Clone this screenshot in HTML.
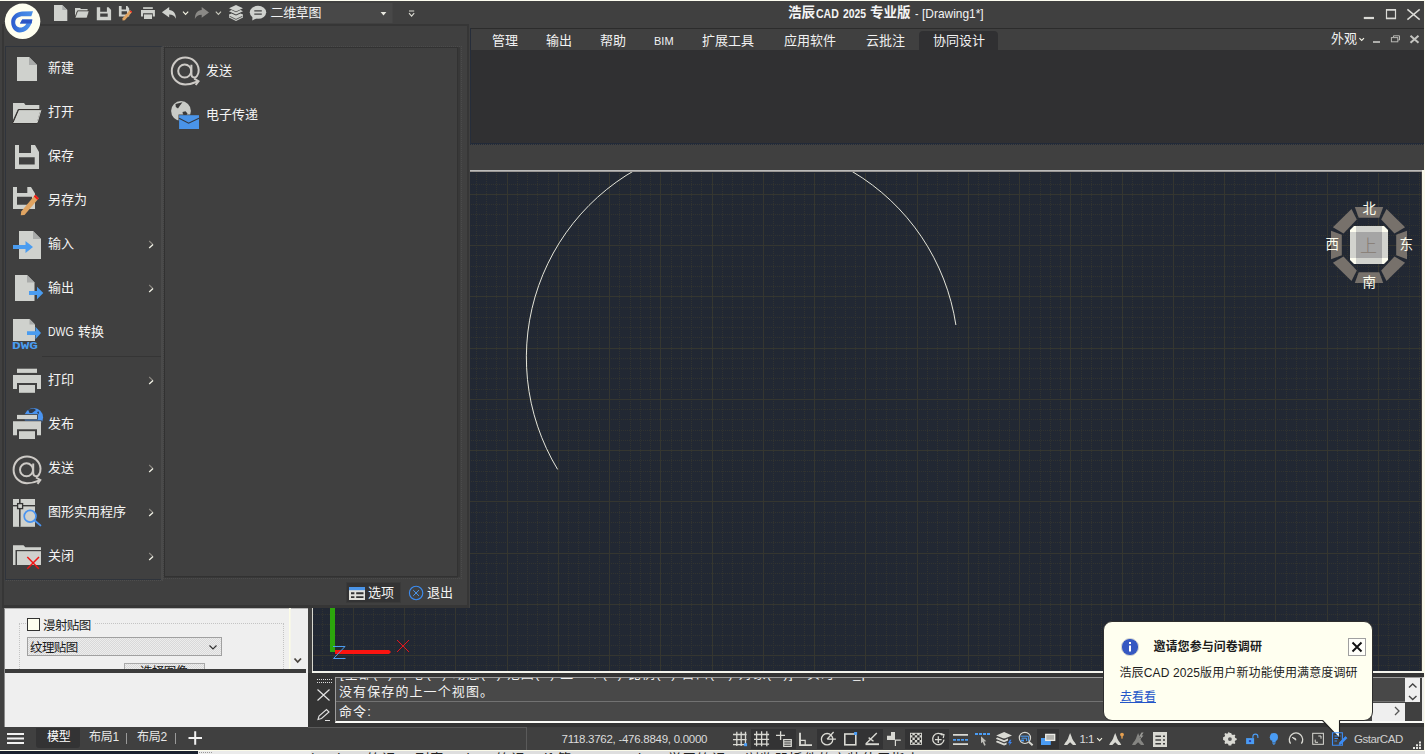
<!DOCTYPE html>
<html lang="zh-CN">
<head>
<meta charset="utf-8">
<title>浩辰CAD 2025 专业版 - [Drawing1*]</title>
<style>
*{box-sizing:border-box;margin:0;padding:0}
html,body{width:1425px;height:754px;overflow:hidden;background:#404040}
body{position:relative;font-family:"Liberation Sans","Noto Sans CJK SC",sans-serif;font-size:13px;color:#f0f0f0;line-height:1}
.abs{position:absolute}
.t{position:absolute;white-space:nowrap;line-height:1}
svg{position:absolute;overflow:visible}
#cv{overflow:hidden}
/* ---------- frame ---------- */
#topline{left:0;top:0;width:1425px;height:1px;background:#fdfdf0}
#rightline{left:1424px;top:0;width:1px;height:754px;background:#fdfdf0}
#titlebar{left:0;top:1px;width:1424px;height:27px;background:#404040}
#titlesep{left:470px;top:28px;width:954px;height:1px;background:#2c2c2c}
#tabsrow{left:470px;top:29px;width:954px;height:21px;background:#404040}
#ribbon{left:470px;top:50px;width:954px;height:93px;background:#303032}
#ribbonsep{left:470px;top:143px;width:954px;height:2px;background:linear-gradient(#222a38 50%,transparent 50%),repeating-linear-gradient(90deg,#222a38 0 1px,#404040 1px 2px)}
#docbar{left:470px;top:144px;width:954px;height:26px;background:#404040}
#canvastop{left:470px;top:170px;width:952px;height:2px;background:linear-gradient(#bababa 50%,#9a9796 50%)}
/* ---------- canvas ---------- */
#canvas{left:313px;top:171px;width:1108px;height:500px;background:#222833;overflow:hidden}
#canvasL{left:312px;top:171px;width:1px;height:502px;background:#d8d8d0}
#canvasB{left:312px;top:671px;width:1111px;height:2px;background:#f4f4ec}
/* ---------- tabs ---------- */
.tab{top:34px;font-size:13px;color:#f2f2f2}
#acttab{left:919px;top:31px;width:79px;height:19px;background:#303032;border-radius:4px 4px 0 0}

/* left prop panel */
#lp{left:4px;top:608px;width:304px;height:119px;background:#efefef;border-top:1px solid #b4b4b4;border-left:1px solid #8a8a8a}
#lpbar{left:5px;top:669px;width:301px;height:4px;background:#3c3c3c}
#lpgrp{left:19px;top:623px;width:265px;height:60px;border:1px dotted #c4c4c4}
#lpline{left:289px;top:607px;width:1px;height:62px;background:#fcfce8;box-shadow:1px 0 0 #f6f6ea}
#lpcb{left:27px;top:618px;width:13px;height:13px;background:#fffff0;border:1px solid #333}
#lpcombo{left:27px;top:637px;width:195px;height:19px;border:1px solid #a0a0a0;background:repeating-conic-gradient(#d9d9d9 0 25%,#ededed 0 50%);background-size:2px 2px}
#lpbtn{left:124px;top:663px;width:81px;height:12px;border:1px solid #a8a8a8;background:repeating-conic-gradient(#d9d9d9 0 25%,#ededed 0 50%);background-size:2px 2px}
.lpt{font-size:12.5px;color:#1a1a1a;letter-spacing:-0.6px}
/* cmd */
#cmdbox{left:335px;top:677px;width:1089px;height:46px;border:1px solid #9c9c9c;border-bottom:2px solid #fcfcf8;border-right:2px solid #f0f0ec;background:#484848;overflow:hidden}
#cmdline2{left:336px;top:701px;width:1069px;height:20px;background:#484848;border-top:1px solid #727272}
.cmdt{font-size:13px;color:#f2f2f2;letter-spacing:1.1px}
#vsb{left:1405px;top:678px;width:15px;height:24px;background:#efefef}
#vsbgap{left:1420px;top:678px;width:2px;height:43px;background:#404040}
#hsb{left:1372px;top:703px;width:33px;height:18px;background:#efefef}
#sbcorner{left:1405px;top:702px;width:17px;height:19px;background:#404040}
/* status */
#modeltab{left:36px;top:728px;width:44px;height:20px;background:#333334;border-radius:0 0 3px 3px}
.st{font-size:12px;color:#e8e8e8;top:731px;letter-spacing:-0.2px}
.sact{position:absolute;top:729px;height:20px;background:#333334}
#stsepv{left:526px;top:727px;width:1px;height:23px;background:#5a5a5a}
#stseph{left:308px;top:727px;width:219px;height:1px;background:#5a5a5a}
/* balloon */
#balloon{left:1103px;top:621px;width:270px;height:100px;background:#fffff0;border:1px solid #2e2e2e;border-radius:9px}
#bclose{left:1348px;top:638px;width:18px;height:18px;border:1px solid #a0a0a0;background:#fffffa}
.bt{font-size:12px;color:#1c1c1c}

/* ---------- status bar ---------- */
#status{left:0;top:727px;width:1424px;height:23px;background:#404040}
#under{left:0;top:750px;width:1425px;height:4px;background:#dedede}
/* ---------- cmd ---------- */
#cmdwrap{left:308px;top:673px;width:1116px;height:54px;background:#343434}
/* ---------- app menu ---------- */
#menu{left:2px;top:24px;width:467px;height:584px;background:#404040;border:2px solid #363636;border-bottom-width:3px;box-shadow:1px 0 0 #404040}
#mleft{left:5px;top:46px;width:158px;height:535px;border:1px solid #2f343c;border-right:2px solid #4a4a4a;border-bottom:1px dotted #4e4e4e}
#mleftb{left:6px;top:579px;width:155px;height:1px;background:#2f343c}
#ribl{left:470px;top:28px;width:1px;height:116px;background:#262d3a}
#mright{left:163px;top:46px;width:299px;height:533px;border:1px dotted #4b4b4b}
#mright2{left:164px;top:47px;width:294px;height:530px;border:1px solid #323232;box-shadow:2px 0 0 #383838,0 1px 0 #383838}
.tt{color:#f4f4f4}
.sx{transform-origin:0 50%}
.vc{font-size:13.5px;color:#fdfdee}
.mi{font-size:13px;color:#f4f4f4;left:48px}
#msep{left:42px;top:356px;width:119px;height:1px;background:#353535}
#optbtn{left:346px;top:582px;width:55px;height:21px;background:#333334;border:1px solid #3a3a3a}
</style>
</head>
<body>
<div class="abs" id="titlebar"></div>
<div class="abs" id="topline"></div>
<div class="abs" id="titlesep"></div>
<div class="abs" id="tabsrow"></div>
<div class="abs" id="ribbon"></div>
<div class="abs" id="docbar"></div>
<div class="abs" id="ribbonsep"></div>
<div class="abs" id="ribl"></div>
<div class="abs" id="rightline"></div>

<!-- title -->
<div class="t tt" style="left:788px;top:6px;font-size:13.5px;font-weight:bold">浩辰</div>
<div class="t tt sx" style="left:816.2px;top:6.5px;font-size:13px;font-weight:bold;transform:scaleX(0.81)">CAD</div>
<div class="t tt sx" style="left:842.5px;top:6.5px;font-size:13px;font-weight:bold;transform:scaleX(0.80)">2025</div>
<div class="t tt" style="left:870px;top:6px;font-size:13.5px;font-weight:bold">专业版</div>
<div class="t tt sx" style="left:915px;top:6.5px;font-size:13px;transform:scaleX(0.8)">-</div>
<div class="t tt sx" style="left:922px;top:6.5px;font-size:13px;transform:scaleX(0.918)">[Drawing1*]</div>

<!--QAT0-->
<svg class="abs" style="left:0;top:0" width="470" height="28" viewBox="0 0 470 28">
<!-- new -->
<path d="M54 5H62.3L67.3 10V21H54Z" fill="#cfd1cd"/><path d="M62.3 5L67.3 10H62.3Z" fill="#a9abaa"/>
<!-- open -->
<path d="M75 8H80L81 9H87.6V10.8H77.2L75 16.5Z" fill="#cfd1cd"/>
<path d="M77.6 10.9H89.2L87 18.1H74.9Z" fill="#cfd1cd" stroke="#3a3634" stroke-width="0.7"/>
<!-- save -->
<path d="M96.8 7.2H108.6L111.1 10V20.2H96.8Z M100.2 7.2V11.8H106.9V7.2Z M100.2 13.5V16.8H107.7V13.5Z" fill="#cfd1cd" fill-rule="evenodd"/>
<!-- save as -->
<path d="M118.9 6H127.4L129.2 8.5V16.4H118.9Z M121.6 6V9.4H126V6Z M121.6 11.2V14.4H127V11.2Z" fill="#cfd1cd" fill-rule="evenodd"/>
<path d="M129.9 10L132.1 12L124.8 20.3L122.5 20.6L122.6 18.3Z" fill="#e0a462"/>
<path d="M130.6 10.6L132.1 12L131.4 12.8L129.9 11.4Z" fill="#f01818"/>
<!-- print -->
<rect x="143.1" y="7.2" width="9.7" height="1.7" fill="#cfd1cd"/>
<path d="M141 10.1H154.9V16.4H152.8V13.3H143.1V16.4H141Z" fill="#cfd1cd"/>
<rect x="144" y="14.4" width="8" height="4.6" fill="#cfd1cd"/>
<!-- undo -->
<path d="M169.2 6.9V9.9C173.5 10.3 176 13.5 176 18.7C174.5 15.8 172.5 14.6 169.2 14.5V17.5L161.9 12.2Z" fill="#cfd1cd"/>
<path d="M183 11.6L185.6 14.4L188.2 11.6" stroke="#f4f4e4" stroke-width="1.1" fill="none"/>
<!-- redo (disabled) -->
<path d="M201.7 7.1V10.1C197.4 10.5 194.9 13.7 194.9 18.9C196.4 16 198.4 14.8 201.7 14.7V17.7L209 12.4Z" fill="#8a8986"/>
<path d="M215.8 11.6L218.4 14.4L221 11.6" stroke="#c8c8bc" stroke-width="1.1" fill="none"/>
<!-- layers -->
<path d="M236 5L243 8.3L236 11.6L229 8.3Z" fill="#cfd1cd"/>
<path d="M229 11.2L231.5 10L236 12.2L240.5 10L243 11.2L236 14.6Z" fill="#cfd1cd"/>
<path d="M229 14.6L231.5 13.4L236 15.6L240.5 13.4L243 14.6V17.4L236 21L229 17.4Z" fill="#cfd1cd"/>
<path d="M229.5 16.2L236 19.4L242.5 16.2" stroke="#404040" stroke-width="0.8" fill="none"/>
<!-- bubble -->
<ellipse cx="258" cy="12.3" rx="8.2" ry="6.5" fill="#cfd1cd"/>
<path d="M252.5 16.5L252.3 20.6L257 18Z" fill="#cfd1cd"/>
<path d="M254.3 10.9H261.8M254.3 14.1H261.8" stroke="#404040" stroke-width="1.1"/>
<!-- combo -->
<rect x="270" y="3" width="122.5" height="20" fill="#484848"/>
<path d="M380.6 12H386.4L383.5 15.4Z" fill="#e8e8e0"/>
<path d="M409 11H414.2" stroke="#dcdcd4" stroke-width="1"/>
<path d="M409 13.2L411.6 16.2L414.2 13.2" stroke="#dcdcd4" stroke-width="1.1" fill="none"/>
</svg>
<div class="t" style="left:270.5px;top:6px;font-size:13px;color:#f2f2f2;letter-spacing:-0.35px">二维草图</div>
<!--QAT1-->
<!-- ribbon tabs -->
<div class="abs" id="acttab"></div>
<div class="t tab" style="left:492px">管理</div>
<div class="t tab" style="left:546px">输出</div>
<div class="t tab" style="left:600px">帮助</div>
<div class="t tab" style="left:654px;font-size:11px;top:36px">BIM</div>
<div class="t tab" style="left:702px">扩展工具</div>
<div class="t tab" style="left:784px">应用软件</div>
<div class="t tab" style="left:866px">云批注</div>
<div class="t tab" style="left:933px">协同设计</div>
<div class="t tab" style="left:1331px;top:32px">外观</div>

<svg class="abs" style="left:1340px;top:0" width="85" height="52" viewBox="1340 0 85 52">
<g fill="none" stroke="#dadad6">
<path d="M1363.8 18H1374" stroke-width="2.2"/>
<path d="M1386.5 9.8H1395.5V18.3H1386.5Z" stroke-width="1.2"/><path d="M1386 9.7H1396M1386 18.5H1396" stroke-width="1.6"/>
<path d="M1407.4 9.4L1419.7 19.7M1419.7 9.4L1407.4 19.7" stroke-width="1.5"/>
<path d="M1359.4 38.2L1361.7 40.5L1364 38.2" stroke="#f4f4e8" stroke-width="1.1"/>
<path d="M1373 42H1380" stroke="#bcbcb8" stroke-width="1.8"/>
<path d="M1393.5 37V35.8H1399.5V40H1398.2" stroke="#b8b8b4" stroke-width="1"/><rect x="1391.4" y="37.6" width="6.4" height="4.2" stroke="#b8b8b4" stroke-width="1"/>
<path d="M1410.5 35.8L1418.5 42.8M1418.5 35.8L1410.5 42.8" stroke="#c4c4c0" stroke-width="2"/>
</g></svg>
<!-- canvas -->
<svg id="cv" class="abs" style="left:313px;top:171px" width="1108" height="500" viewBox="313 171 1108 500">
<rect x="313" y="171" width="1108" height="500" fill="#222833"/>
<path d="M322.5 173V671M332.5 173V671M343.5 173V671M363.5 173V671M373.5 173V671M384.5 173V671M394.5 173V671M414.5 173V671M425.5 173V671M435.5 173V671M445.5 173V671M466.5 173V671M476.5 173V671M486.5 173V671M496.5 173V671M517.5 173V671M527.5 173V671M537.5 173V671M548.5 173V671M568.5 173V671M578.5 173V671M589.5 173V671M599.5 173V671M619.5 173V671M630.5 173V671M640.5 173V671M650.5 173V671M671.5 173V671M681.5 173V671M691.5 173V671M701.5 173V671M722.5 173V671M732.5 173V671M742.5 173V671M753.5 173V671M773.5 173V671M783.5 173V671M794.5 173V671M804.5 173V671M824.5 173V671M835.5 173V671M845.5 173V671M855.5 173V671M876.5 173V671M886.5 173V671M896.5 173V671M906.5 173V671M927.5 173V671M937.5 173V671M947.5 173V671M958.5 173V671M978.5 173V671M988.5 173V671M999.5 173V671M1009.5 173V671M1029.5 173V671M1040.5 173V671M1050.5 173V671M1060.5 173V671M1081.5 173V671M1091.5 173V671M1101.5 173V671M1111.5 173V671M1132.5 173V671M1142.5 173V671M1152.5 173V671M1163.5 173V671M1183.5 173V671M1193.5 173V671M1204.5 173V671M1214.5 173V671M1234.5 173V671M1245.5 173V671M1255.5 173V671M1265.5 173V671M1286.5 173V671M1296.5 173V671M1306.5 173V671M1316.5 173V671M1337.5 173V671M1347.5 173V671M1357.5 173V671M1368.5 173V671M1388.5 173V671M1398.5 173V671M1409.5 173V671M1419.5 173V671M313 184.5H1421M313 204.5H1421M313 214.5H1421M313 225.5H1421M313 235.5H1421M313 255.5H1421M313 266.5H1421M313 276.5H1421M313 286.5H1421M313 307.5H1421M313 317.5H1421M313 327.5H1421M313 337.5H1421M313 358.5H1421M313 368.5H1421M313 378.5H1421M313 389.5H1421M313 409.5H1421M313 419.5H1421M313 430.5H1421M313 440.5H1421M313 460.5H1421M313 471.5H1421M313 481.5H1421M313 491.5H1421M313 512.5H1421M313 522.5H1421M313 532.5H1421M313 542.5H1421M313 563.5H1421M313 573.5H1421M313 583.5H1421M313 594.5H1421M313 614.5H1421M313 624.5H1421M313 635.5H1421M313 645.5H1421M313 665.5H1421" stroke="#313330" stroke-width="1" stroke-dasharray="1 1" fill="none" shape-rendering="crispEdges"/>
<path d="M353.5 173V671M404.5 173V671M455.5 173V671M507.5 173V671M558.5 173V671M609.5 173V671M660.5 173V671M712.5 173V671M763.5 173V671M814.5 173V671M865.5 173V671M917.5 173V671M968.5 173V671M1019.5 173V671M1070.5 173V671M1122.5 173V671M1173.5 173V671M1224.5 173V671M1275.5 173V671M1327.5 173V671M1378.5 173V671M313 194.5H1421M313 245.5H1421M313 296.5H1421M313 348.5H1421M313 399.5H1421M313 450.5H1421M313 501.5H1421M313 553.5H1421M313 604.5H1421M313 655.5H1421" stroke="#353630" stroke-width="1" fill="none" shape-rendering="crispEdges"/>
<path d="M557.6 469.4A216 216 0 1 1 955.9 325" stroke="#eeeee2" stroke-width="0.95" fill="none"/>
</svg>
<div class="abs" id="canvastop"></div>

<!-- UCS icon -->
<svg class="abs" style="left:0;top:0" width="1425" height="754" viewBox="0 0 1425 754">
 <rect x="330" y="606" width="5" height="46" fill="#2ca60c"/>
 <path d="M335 650H389L391 652L389 654H335Z" fill="#fb1410"/>
 <path d="M397 640L409 652M409 640L397 652" stroke="#e8141c" stroke-width="1" fill="none"/>
 <path d="M333 646.5H345L333.5 658.5H345.5" stroke="#4c9cf0" stroke-width="1" fill="none"/>
 <!-- view cube -->
 <g transform="translate(1369 245)" fill="#77716b">
  <polygon points="-14.2,-38 14.2,-38 10.3,-27.2 -10.3,-27.2"/>
  <polygon points="-14.2,38 14.2,38 10.3,27.2 -10.3,27.2"/>
  <polygon points="-38,-14.2 -38,14.2 -27.2,10.3 -27.2,-10.3"/>
  <polygon points="38,-14.2 38,14.2 27.2,10.3 27.2,-10.3"/>
  <polygon points="17.5,-36.1 36.1,-17.8 25.5,-11.5 12.2,-25.5"/>
  <polygon points="-17.5,-36.1 -36.1,-17.8 -25.5,-11.5 -12.2,-25.5"/>
  <polygon points="17.5,36.1 36.1,17.8 25.5,11.5 12.2,25.5"/>
  <polygon points="-17.5,36.1 -36.1,17.8 -25.5,11.5 -12.2,25.5"/>
  <polygon points="-15,-19 15,-19 19,-15 19,15 15,19 -15,19 -19,15 -19,-15" fill="#fcfcee"/>
  <rect x="-19" y="-13" width="38" height="26" fill="#d2d3ce"/>
  <rect x="-13" y="-19" width="26" height="38" fill="#d2d3ce"/>
  <rect x="-13" y="-13" width="26" height="26" fill="#a5a5a5"/>
 </g>
</svg>
<div class="t vc" style="left:1362.5px;top:201.5px">北</div>
<div class="t vc" style="left:1362.5px;top:276px">南</div>
<div class="t vc" style="left:1325.5px;top:238px">西</div>
<div class="t vc" style="left:1399.5px;top:238px">东</div>
<div class="t" style="left:1360px;top:237.5px;font-size:17px;color:#857a72;font-weight:300">上</div>
<div class="abs" id="canvasL"></div>
<div class="abs" id="canvasB"></div>
<div class="abs" style="left:1422px;top:170px;width:3px;height:557px;background:#fbfbee"></div>

<!-- left property panel -->
<div class="abs" id="lp"></div>
<div class="abs" id="lpgrp"></div>
<div class="abs" style="left:40px;top:620px;width:54px;height:8px;background:#efefef"></div>
<div class="abs" id="lpline"></div>
<div class="abs" id="lpcb"></div>
<div class="t lpt" style="left:43px;top:620px">漫射贴图</div>
<div class="abs" id="lpcombo"></div>
<div class="t lpt" style="left:30px;top:642px">纹理贴图</div>
<div class="abs" id="lpbtn"></div>
<div class="t lpt" style="left:140px;top:665.5px">选择图像</div>
<div class="abs" style="left:5px;top:673px;width:303px;height:54px;background:#efefef"></div>
<div class="abs" id="lpbar"></div>
<svg class="abs" style="left:0;top:600px" width="320" height="80" viewBox="0 600 320 80">
 <path d="M209.5 645.5L213 649L216.5 645.5" stroke="#333" stroke-width="1.2" fill="none"/>
 <path d="M294.5 658.5L297.7 662L301 658.5" stroke="#4a4540" stroke-width="1.8" fill="none"/>
</svg>

<!-- command window -->
<div class="abs" id="cmdwrap"></div>
<div class="abs" id="cmdbox"></div>
<div class="abs" id="cmdline2"></div>
<div class="abs" style="left:336px;top:678px;width:1069px;height:3px;overflow:hidden"><div class="t cmdt" style="left:4px;top:-11px">[全部(A)/中心(C)/动态(D)/范围(E)/上一个(P)/比例(S)/窗口(W)/对象(O)] &lt;实时&gt;: _p</div></div>
<div class="t cmdt" style="left:339px;top:685px">没有保存的上一个视图。</div>
<div class="t cmdt" style="left:339px;top:705px">命令:</div>
<div class="abs" id="vsb"></div>
<div class="abs" id="vsbgap"></div>
<div class="abs" id="sbcorner"></div>
<div class="abs" id="hsb"></div>
<svg class="abs" style="left:313px;top:673px" width="1112" height="55" viewBox="313 673 1112 55">
 <path d="M317 679H332M317 682H332" stroke="#e0e0e0" stroke-width="1" stroke-dasharray="1 1" fill="none" shape-rendering="crispEdges"/>
 <path d="M317.5 689.5L329.5 700.5M329.5 689.5L317.5 700.5" stroke="#e4e4e4" stroke-width="1.2" fill="none"/>
 <path d="M318 719.5L319 716L326.5 709.5L329 712L321.5 718.5ZM325 720.5H330" stroke="#e0e0e0" stroke-width="1.1" fill="none"/>
 <path d="M1409 687.5L1412.7 684L1416.5 687.5M1409 696L1412.7 699.5L1416.5 696" stroke="#444" stroke-width="1.4" fill="none"/>
 <path d="M1395 707L1399 711L1395 715" stroke="#555" stroke-width="1.3" fill="none"/>
</svg>

<!-- status bar -->
<div class="abs" id="status"></div>
<div class="abs" id="stseph"></div>
<div class="abs" id="stsepv"></div>
<div class="abs" id="modeltab"></div>
<div class="sact" style="left:751px;width:45px"></div>
<div class="sact" style="left:817px;width:66px"></div>
<div class="sact" style="left:905px;width:44px"></div>
<div class="sact" style="left:1037px;width:22px"></div>
<div class="t st" style="left:47px;color:#fff">模型</div>
<div class="t st" style="left:89px">布局1</div>
<div class="t st" style="left:137px">布局2</div>
<div class="abs" style="left:126px;top:733px;width:1px;height:11px;background:#9a9a9a"></div>
<div class="abs" style="left:175px;top:733px;width:1px;height:11px;background:#9a9a9a"></div>
<div class="t" style="left:561.5px;top:733.5px;font-size:11.5px;color:#dcdcdc;letter-spacing:-0.27px">7118.3762, -476.8849, 0.0000</div>
<div class="t" style="left:1079.5px;top:733.5px;font-size:11.5px;color:#dcdcdc;letter-spacing:-0.6px">1:1</div>
<div class="t" style="left:1354px;top:733.5px;font-size:11.5px;color:#cfcfcf;letter-spacing:-0.45px">GstarCAD</div>
<svg class="abs" style="left:0;top:727px" width="1425" height="24" viewBox="0 727 1425 24">
<g stroke="#f2f2f2" stroke-width="2" fill="none"><path d="M7 734H24M7 738.5H24M7 743H24" stroke-width="2"/><path d="M188.5 738H202M195.2 731.3V744.7"/></g>
<!--SI0-->
<g fill="none" stroke="#d9d9d3" stroke-width="1.3">
<!-- snap grid -->
<path d="M736.8 731.7V746M741.2 731.7V746M745.5 731.7V746M733 734.5H746.6M733 739.6H746.6M733 744.6H746.6"/>
<!-- grid -->
<path d="M756.6 731.2V746.3M761.6 731.2V746.3M766.8 731.2V746.3M754 734.5H769.1M754 739.3H769.1M754 744.2H769.1"/>
<!-- plus list -->
<path d="M776 735.4H785M780.6 731.2V740"/>
<path d="M783.7 739.6H791.3V746.3H783.7Z M784 741.9H791M784 744.1H791" stroke-width="1.2"/>
<!-- ortho -->
<path d="M800 732.8V745.1H812" stroke-width="1.9"/><path d="M800 740.4H805.2V745" stroke-width="1.2"/>
<!-- polar -->
<circle cx="827.1" cy="739.2" r="5.7"/><path d="M827.1 739.2L833.6 732M827.1 739.2H835.9"/>
<!-- osnap square -->
<rect x="844.8" y="734" width="11" height="10.8" stroke-width="1.6"/>
<!-- angle -->
<path d="M865.5 744.2H879" stroke-width="1.9"/><path d="M866 743.8L876.8 733.1M868.6 737.6L873.5 741.2" stroke-width="1.4"/>
<!-- small corner -->
<path d="M895.4 745.9V740.2H900.8" stroke-width="1.2"/>
<!-- circle plus -->
<path d="M942.6 735.2A5.7 5.7 0 1 0 944 739.6"/><path d="M935 739.6H941.6M938.3 736.3V742.9" stroke-width="1.3"/>
<path d="M940.6 733.6L944 734.6L943.2 738" stroke-width="1.2"/>
<!-- lineweight -->
<path d="M953 734.9H968M953 744.1H968" stroke-width="1.9"/>
<!-- magnifier -->
<circle cx="1024.9" cy="737.9" r="5.6" stroke-width="1.2"/><path d="M1029 742L1032.6 745.2" stroke-width="1.9"/>
<!-- gauge -->
<path d="M1290.6 743.6A6.7 6.7 0 1 1 1301.4 743.6" stroke-width="1.3"/>
<!-- expand -->
<rect x="1312.7" y="733.3" width="10.7" height="11" stroke-width="1"/>
<path d="M1318.3 736H1321V738.7M1315.2 739.6V742.3H1318" stroke-width="1"/>
</g>
<g fill="#d9d9d3">
<!-- dyn ucs -->
<path d="M887 735.8H891V732H895V740H887Z"/>
<!-- hatch checker -->
<rect x="910" y="732.8" width="12" height="12"/>
<!-- cursor -->
<path d="M981 736.2V743.2L982.6 742.1L984.3 745.7L985.7 745.1L984.1 741.5L986.3 741.3Z" fill="#bdbdb8"/>
<!-- layers -->
<path d="M1004.1 732L1012 735.4L1004.1 738.8L996.2 735.4Z"/>
<path d="M996.2 738L997.6 737.4L1004.1 740.2L1008 738.6V740.6L1004.1 742.2L996.2 738.9Z"/>
<path d="M996.2 741.3L997.6 740.7L1004.1 743.5L1006.6 742.5V744.5L1004.1 745.6L996.2 742.2Z"/>
<!-- anno scale -->
<g id="anno"><path d="M1070.1 733L1071.5 736.6C1072 740 1075 742.2 1076.2 744.9H1073L1070.1 742.2L1067.2 744.9H1064C1065.2 742.2 1068.2 740 1068.7 736.6Z"/></g>
<use href="#anno" x="45.1"/>
<use href="#anno" x="68" opacity="0.45"/>
<path d="M1141.5 732.5L1139 736.8H1141L1139.2 740.5L1143.5 735.6H1141.6L1143.6 732.5Z" fill="#9a9a96"/>
<!-- table -->
<rect x="1153" y="732" width="14" height="15"/>
<!-- gear -->
<path d="M1229.9 733.1 l1.3 0 l0.5 1.4 l1.3 0.6 l1.4 -0.7 l1 1 l-0.7 1.4 l0.6 1.3 l1.4 0.5 l0 1.3 l-1.4 0.5 l-0.6 1.3 l0.7 1.4 l-1 1 l-1.4 -0.7 l-1.3 0.6 l-0.5 1.4 l-1.3 0 l-1.3 0 l-0.5 -1.4 l-1.3 -0.6 l-1.4 0.7 l-1 -1 l0.7 -1.4 l-0.6 -1.3 l-1.4 -0.5 l0 -1.3 l0 -1.3 l1.4 -0.5 l0.6 -1.3 l-0.7 -1.4 l1 -1 l1.4 0.7 l1.3 -0.6 l0.5 -1.4 Z"/>
<!-- grip -->
<path d="M1419 741.5h2v2h-2zM1416 744.3h2v2h-2zM1419 744.3h2v2h-2zM1413 747.1h2v2h-2zM1416 747.1h2v2h-2zM1419 747.1h2v2h-2z" fill="#e4e4e0"/>
</g>
<circle cx="1229.9" cy="739.1" r="1.9" fill="#555"/>
<g fill="#2b2b2b">
<path d="M912.4 735.2h2.4v2.4h-2.4zM917.2 735.2h2.4v2.4h-2.4zM914.8 737.6h2.4v2.4h-2.4zM912.4 740h2.4v2.4h-2.4zM917.2 740h2.4v2.4h-2.4zM910.9 733.7h1.5v1.5h-1.5zM914.8 733.7h2.4v1.5h-2.4zM919.6 733.7h1.5v1.5h-1.5zM910.9 737.6h1.5v2.4h-1.5zM919.6 737.6h1.5v2.4h-1.5zM910.9 742.4h1.5v1.5h-1.5zM914.8 742.4h2.4v1.5h-2.4zM919.6 742.4h1.5v1.5h-1.5z"/>
<path d="M1155.4 735.4H1161V737H1155.4ZM1163 735.4H1165V737H1163ZM1155.4 739.2H1161V740.8H1155.4ZM1163 739.2H1165V740.8H1163ZM1155.4 743H1161V744.6H1155.4ZM1163 743H1165V744.6H1163Z" fill="#404040"/>
</g>
<path d="M1004.1 738.4L1004.1 739.2" stroke="#404040"/>
<g fill="#4a9cf4">
<rect x="744.1" y="743.2" width="3" height="3"/>
<rect x="854.1" y="732" width="3" height="3"/>
<path d="M1009.8 739.8L1008 743.2H1009.8L1008.8 746L1012 742H1010.2L1011.4 739.8Z" fill="#3c84f0"/>
<!-- blue rects -->
<path d="M1041 738.1H1045.2V740.8H1050.8V745H1041Z"/>
<!-- lock -->
<rect x="1246.1" y="738.1" width="8" height="6"/>
<!-- bulb -->
<circle cx="1273.9" cy="737.2" r="4.1"/><rect x="1272.2" y="740.6" width="3.5" height="2"/><path d="M1272 743.3H1275.8L1273.9 745Z"/>
</g>
<rect x="1248.9" y="740.1" width="2.2" height="2" fill="#2a40b0"/>
<path d="M1252.9 738V736.8A2.5 2.7 0 0 1 1257.9 736.8V738" fill="none" stroke="#4a9cf4" stroke-width="1.1"/>
<g fill="none" stroke="#4a9cf4">
<path d="M953 739.9H968" stroke-width="1.9" stroke-dasharray="3 1"/>
<path d="M975 734H990" stroke-width="1.8" stroke-dasharray="3 1"/>
<path d="M1020.5 736.2H1028.6V741M1021.5 738.2H1026.6V741" stroke-width="1"/>
</g>
<rect x="1021" y="739.6" width="3" height="1.8" fill="#4a9cf4"/>
<rect x="1045.7" y="734.4" width="9" height="6" fill="#b4b4b0" stroke="#ecece6" stroke-width="1.3"/>
<path d="M1296 740.2L1292.2 737.4L1295.4 738.4Z" fill="#e4e4e0" stroke="#e4e4e0" stroke-width="0.8"/>
<circle cx="1122" cy="734.6" r="1.9" fill="#e6a050"/><rect x="1121.3" y="736" width="1.4" height="2.6" fill="#e6a050"/>
<path d="M1097.2 738.2L1099.6 740.6L1102 738.2" stroke="#f4f4e4" stroke-width="1.1" fill="none"/>
<!--SI1-->
</svg>
<div class="abs" id="under"></div>
<div class="abs" style="left:0;top:751px;width:198px;height:3px;background:#1a2230"></div>
<div class="abs" style="left:198px;top:751px;width:114px;height:3px;background:#ebebeb"></div>
<div class="abs" style="left:199px;top:752px;width:13px;height:1px;background:repeating-linear-gradient(90deg,#999 0 1px,#ebebeb 1px 2px)"></div>
<div class="abs" style="left:311px;top:751px;width:1114px;height:3px;background:#dedede;overflow:hidden"><div class="t" style="left:0;top:0.5px;font-size:14px;color:#222;letter-spacing:0.6px">|Python 笔记一 列表Python 笔记二 if 第789一 Python 学习笔记一 浏览器插件的安装使用指南</div></div>
<div class="abs" style="left:0;top:750px;width:1425px;height:1px;background:#fbfbea"></div>


<!-- balloon -->
<div class="abs" id="balloon"></div>
<svg class="abs" style="left:1100px;top:615px" width="290" height="135" viewBox="1100 615 290 135">
 <path d="M1322.6 720.5L1339.5 738.3V720.5" fill="#fffff0" stroke="#222" stroke-width="1.1"/>
 <rect x="1323.6" y="718.5" width="15.3" height="2.6" fill="#fffff0"/>
<g fill="none" stroke="#3c8cf4" stroke-width="1.1"><path d="M1332.5 732.7H1342.4V745.2H1332.5Z"/><path d="M1334.5 736H1338.5M1334.5 738.5H1338M1334.5 741H1337M1340 735.5V736.5"/></g>
<path d="M1345.5 736.6L1347 738.1L1341.2 744L1339.2 744.5L1339.6 742.5Z" fill="#3c8cf4" stroke="#3c8cf4" stroke-width="0.8"/>
 <circle cx="1130" cy="647" r="8.6" fill="#3558c2" stroke="#d8d8d0" stroke-width="1"/>
 <rect x="1129" y="645.5" width="2" height="6" fill="#fff"/><rect x="1129" y="642" width="2" height="2" fill="#fff"/>
</svg>
<div class="abs" id="bclose"></div>
<svg class="abs" style="left:1348px;top:638px" width="18" height="18" viewBox="0 0 18 18"><path d="M4.5 4.5L13.5 13.5M13.5 4.5L4.5 13.5" stroke="#111" stroke-width="1.9" fill="none"/></svg>
<div class="t bt" style="left:1153.5px;top:641px;font-weight:bold;letter-spacing:0.05px">邀请您参与问卷调研</div>
<div class="t bt" style="left:1119.5px;top:666.5px;letter-spacing:0.12px">浩辰CAD 2025版用户新功能使用满意度调研</div>
<div class="t bt" style="left:1120px;top:691px;color:#2456c8;text-decoration:underline">去看看</div>

<!-- application menu -->
<div class="abs" id="menu"></div>
<div class="abs" id="mleft"></div>
<div class="abs" id="mleftb"></div>
<div class="abs" id="mright"></div>
<div class="abs" id="mright2"></div>
<div class="abs" id="msep"></div>
<div class="abs" id="optbtn"></div>
<div class="t mi" style="top:61px">新建</div>
<div class="t mi" style="top:105px">打开</div>
<div class="t mi" style="top:149px">保存</div>
<div class="t mi" style="top:193px">另存为</div>
<div class="t mi" style="top:237px">输入</div>
<div class="t mi" style="top:281px">输出</div>
<div class="t mi sx" style="top:325.5px;font-size:12.5px;transform:scaleX(0.84)">DWG</div>
<div class="t mi" style="top:325px;left:78px">转换</div>
<div class="t mi" style="top:373px">打印</div>
<div class="t mi" style="top:417px">发布</div>
<div class="t mi" style="top:461px">发送</div>
<div class="t mi" style="top:505px">图形实用程序</div>
<div class="t mi" style="top:549px">关闭</div>
<svg class="abs" style="left:0;top:0" width="480" height="620" viewBox="0 0 480 620">
<g id="arrows" fill="none">
<path d="M149.2 241L153 244.6" stroke="#8e8a84" stroke-width="1.1"/><path d="M149.2 248L153 244.6" stroke="#f4f4e8" stroke-width="1.3"/>
<path d="M149.2 285L153 288.6" stroke="#8e8a84" stroke-width="1.1"/><path d="M149.2 292L153 288.6" stroke="#f4f4e8" stroke-width="1.3"/>
<path d="M149.2 377L153 380.6" stroke="#8e8a84" stroke-width="1.1"/><path d="M149.2 384L153 380.6" stroke="#f4f4e8" stroke-width="1.3"/>
<path d="M149.2 465L153 468.6" stroke="#8e8a84" stroke-width="1.1"/><path d="M149.2 472L153 468.6" stroke="#f4f4e8" stroke-width="1.3"/>
<path d="M149.2 509L153 512.6" stroke="#8e8a84" stroke-width="1.1"/><path d="M149.2 516L153 512.6" stroke="#f4f4e8" stroke-width="1.3"/>
<path d="M149.2 553L153 556.6" stroke="#8e8a84" stroke-width="1.1"/><path d="M149.2 560L153 556.6" stroke="#f4f4e8" stroke-width="1.3"/>
</g>
<!--MI0-->
<defs>
 <linearGradient id="gl" x1="0" y1="0" x2="1" y2="0"><stop offset="0" stop-color="#2a58cc"/><stop offset="0.45" stop-color="#3f7fe0"/><stop offset="1" stop-color="#4c92ea"/></linearGradient>
 <g id="doc24"><path d="M0 0H12L20 8V24H0Z" fill="#cfd1cd"/><path d="M12 0L20 8H12Z" fill="#a9abaa"/></g>
</defs>
<!-- logo -->
<circle cx="22.6" cy="21.3" r="17.7" fill="#fffff0"/>
<path d="M33 11.3L22 11.6C15 12.5 11.2 17 11.2 22C11.2 28 14.5 32 19.5 32.5C25 32.5 31.5 28 32.3 19.5L22.2 19.5L20 23.4L26.5 23.4C25 26.5 22 27.6 19.5 27.6C16.5 27 15 24.5 15.2 22C15.5 18.5 18.5 16.3 23 16.3L31.3 16.3Z" fill="url(#gl)"/>
<path d="M22.2 19.5H32.3L31.6 23.4H20Z" fill="#2b55c4"/>
<!-- new -->
<use href="#doc24" x="17" y="57"/>
<!-- open -->
<path d="M13 103H24L25.5 105H39.3V109H18L13 120Z" fill="#cfd1cd"/>
<path d="M18.6 109.6H41.2L37.2 123H12.8Z" fill="#cfd1cd" stroke="#2e2a28" stroke-width="1" stroke-linejoin="miter"/>
<path d="M13.4 122.5H37.2L41 109.8" stroke="#cfd1cd" stroke-width="1" fill="none"/>
<!-- save -->
<path d="M15 145H35L39 152V169H15Z M19 145V153H31V145Z M19 157.2V164.4H34.7V157.2Z" fill="#cfd1cd" fill-rule="evenodd"/>
<!-- save as -->
<path d="M13 187H31L35 193.5V209H13Z M17 187V193H27.3V187Z M17 196.7V204.7H32V196.7Z" fill="#cfd1cd" fill-rule="evenodd"/>
<path d="M35.2 194.8L38.8 198.2L24.5 215L20.8 215.2L21.2 211.5Z" fill="#e0a462"/>
<path d="M35.2 194.8L38.8 198.2L37.4 199.9L33.8 196.5Z" fill="#f01818"/>
<!-- import -->
<path d="M19 231H33L41 239V259H19Z" fill="#cfd1cd"/><path d="M33 231L41 239H33Z" fill="#a9abaa"/>
<path d="M13 245H25.5V241L33 247L25.5 253V249H13Z" fill="#4a9cf0"/>
<!-- export -->
<path d="M15 275H27L34.5 282.5V301H15Z" fill="#cfd1cd"/><path d="M27 275L34.5 282.5H27Z" fill="#a9abaa"/>
<path d="M29 291H37V286.8L43.3 293L37 299.2V295H29Z" fill="#4a9cf0"/>
<!-- dwg -->
<path d="M13 319H29.5L35 324.5V342H13Z" fill="#cfd1cd"/><path d="M29.5 319L35 324.5H29.5Z" fill="#a9abaa"/>
<path d="M27 331.3H35.5V326.7L41 333L35.5 339.3V335.1H27Z" fill="#4a9cf0"/>
<rect x="12" y="341" width="26.5" height="8" fill="#404040"/>
<text x="12" y="348.8" font-family="Liberation Mono,monospace" font-weight="bold" font-size="10.5" fill="#4a9cf0" textLength="26" lengthAdjust="spacingAndGlyphs">DWG</text>
<!-- print -->
<g id="prn"><rect x="17" y="368.7" width="20" height="4.2" fill="#cfd1cd"/><path d="M13 375H41V389H37V383H17V389H13Z" fill="#cfd1cd"/><rect x="19" y="385" width="16" height="7.8" fill="#cfd1cd"/></g>
<!-- publish -->
<circle cx="33.7" cy="417.4" r="9.4" fill="#4a94f0"/>
<path d="M28 409.5L34 408.5L36 410L32 413L29.5 413Z M37 412L39 411.5L38.5 414.5Z" fill="#2f3a4a"/>
<rect x="16.2" y="414.1" width="21.6" height="5.6" fill="#404040"/>
<rect x="12.2" y="420.4" width="29.6" height="2" fill="#404040"/>
<use href="#prn" y="46.2"/>
<!-- send -->
<g id="at" fill="none" stroke="#cdcac6" stroke-width="2">
 <circle cx="26.5" cy="469.8" r="6.5"/>
 <path d="M33.2 463.5V473C33.3 476.5 37 477.3 38.8 474.8C40.3 472.7 40.6 470.5 40.5 468.5C40 461.5 34 456.4 27 456.4C19.5 456.4 13.6 462.3 13.6 469.8C13.6 477.3 19.5 483.2 27 483.2C31.5 483.2 35.5 482 39.5 480.3"/>
 <path d="M36 477.5L40.3 480L37.5 483.8" stroke-linejoin="miter"/>
</g>
<!-- utilities -->
<rect x="13" y="499" width="22" height="27.8" fill="#cfd1cd"/>
<rect x="19" y="499" width="1.6" height="27.8" fill="#3a3a3a"/><rect x="13" y="505" width="22" height="1.4" fill="#3a3a3a"/>
<rect x="17.6" y="503.6" width="5" height="5" fill="#cfd1cd" stroke="#333" stroke-width="1.3"/>
<circle cx="30.1" cy="516.3" r="5.9" fill="none" stroke="#4a94f0" stroke-width="1.7"/>
<path d="M34.4 520.3L40.4 525.4" stroke="#4a94f0" stroke-width="1.9" stroke-linecap="round"/>
<!-- close -->
<path d="M13 545.2H23.5L25.3 547.3H41V550H15.5V565H13Z" fill="#cfd1cd"/>
<rect x="17" y="551.2" width="24" height="13.8" fill="#cfd1cd"/>
<path d="M27.3 557L38.8 568.8M39 557L27.3 568.8" stroke="#f01414" stroke-width="1.5" fill="none"/>
<!-- right: send -->
<use href="#at" x="158.2" y="-398.8"/>
<!-- right: etransmit -->
<circle cx="181" cy="111" r="9.9" fill="#c9cbc7"/>
<path d="M175.5 104L182.5 102.2L180 105.5L178 108.5L175.8 107Z M182.5 112L185.5 111.2L187.5 113.5L186 116L183 114.5Z" fill="#3a3a3a"/>
<rect x="178.5" y="114.5" width="21" height="15" fill="#404040"/>
<rect x="179.1" y="115.2" width="19.9" height="13.8" fill="#4a94e8"/>
<path d="M179.1 118.3L188.6 123.2L199 118.3" stroke="#333840" stroke-width="1.2" fill="none"/>
<!-- options -->
<rect x="349" y="587" width="16" height="13" fill="#e2e2dc"/>
<rect x="349" y="587" width="16" height="3.2" fill="#4a94e8"/>
<path d="M351 592.2H354.4V594.2H351ZM356.2 592.2H363.5V594.2H356.2ZM351 596.3H354.4V598.1H351ZM356.2 596.3H363.5V598.1H356.2Z" fill="#333"/>
<!-- exit -->
<circle cx="416.1" cy="593" r="6.7" fill="none" stroke="#3c8cf0" stroke-width="1.1"/>
<path d="M413.2 590.1L419 595.9M419 590.1L413.2 595.9" stroke="#4c9cf4" stroke-width="1" fill="none"/>
<!--MI1-->
</svg>
<div class="t mi" style="left:206px;top:64px">发送</div>
<div class="t mi" style="left:206px;top:108px">电子传递</div>
<div class="t mi" style="left:368px;top:586px">选项</div>
<div class="t mi" style="left:427px;top:586px">退出</div>

</body>
</html>
